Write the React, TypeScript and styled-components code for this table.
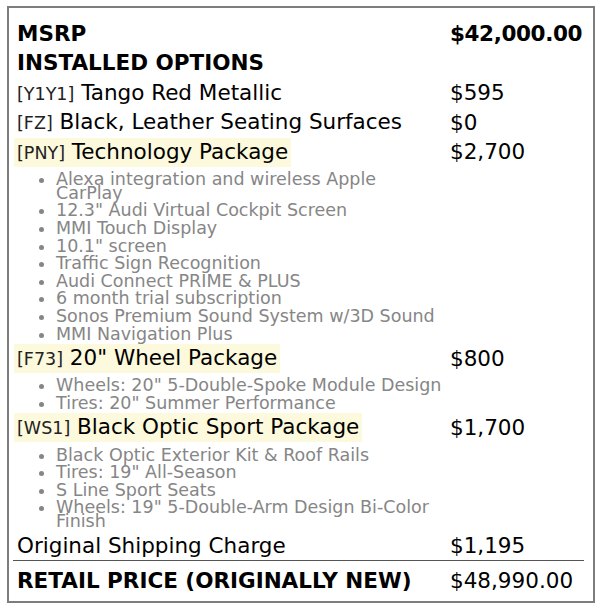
import * as React from 'react';
import styled, { createGlobalStyle } from 'styled-components';

const GlobalStyle = createGlobalStyle`
  body {
    margin: 0;
    background: #fff;
    font-family: "DejaVu Sans", "Noto Sans", sans-serif;
    color: #000;
  }
`;

const Sticker = styled.div`
  box-sizing: border-box;
  width: 588px;
  margin: 6px 0 0 7px;
  border: 2px solid #7d7d7d;
  padding: 10.5px 9px 5px 4px;
`;

const Row = styled.div`
  display: grid;
  grid-template-columns: 433px 1fr;
  align-items: end;
  height: 29.5px;
  font-size: 21.5px;
  line-height: 29.5px;
`;

const Cell = styled.div<{ $bold?: boolean; $condensed?: boolean }>`
  padding: 0 4px;
  white-space: nowrap;
  font-weight: ${(p) => (p.$bold ? 'bold' : 'normal')};
  letter-spacing: ${(p) => (p.$condensed ? '-0.4px' : 'normal')};
`;

const Label = styled.span<{ $highlight?: boolean }>`
  display: inline-block;
  margin-left: -3px;
  padding: 0 3px;
  line-height: 28px;
  background: ${(p) => (p.$highlight ? '#fcf9dc' : 'transparent')};
`;

const Code = styled.span`
  font-size: 17.5px;
  color: #222;
`;

const Features = styled.ul`
  box-sizing: border-box;
  width: 455px;
  margin: 5.75px 0 2.5px;
  padding: 0 0 0 43px;
  font-size: 17.5px;
  line-height: 14px;
  color: #868686;
  white-space: pre-line;

  li + li {
    margin-top: 3.6px;
  }
`;

const Rule = styled.div`
  height: 1px;
  margin-bottom: 5px;
  background: #555;
`;

type Option = {
  code: string;
  name: string;
  price: string;
  highlight?: boolean;
  features?: string[];
};

const options: Option[] = [
  { code: 'Y1Y1', name: 'Tango Red Metallic', price: '$595' },
  { code: 'FZ', name: 'Black, Leather Seating Surfaces', price: '$0' },
  {
    code: 'PNY',
    name: 'Technology Package',
    price: '$2,700',
    highlight: true,
    features: [
      'Alexa integration and wireless Apple\nCarPlay',
      '12.3" Audi Virtual Cockpit Screen',
      'MMI Touch Display',
      '10.1" screen',
      'Traffic Sign Recognition',
      'Audi Connect PRIME & PLUS',
      '6 month trial subscription',
      'Sonos Premium Sound System w/3D Sound',
      'MMI Navigation Plus',
    ],
  },
  {
    code: 'F73',
    name: '20" Wheel Package',
    price: '$800',
    highlight: true,
    features: ['Wheels: 20" 5-Double-Spoke Module Design', 'Tires: 20" Summer Performance'],
  },
  {
    code: 'WS1',
    name: 'Black Optic Sport Package',
    price: '$1,700',
    highlight: true,
    features: [
      'Black Optic Exterior Kit & Roof Rails',
      'Tires: 19" All-Season',
      'S Line Sport Seats',
      'Wheels: 19" 5-Double-Arm Design Bi-Color Finish',
    ],
  },
];

const App = () => {
  return (
    <>
      <GlobalStyle />
      <Sticker>
        <Row>
          <Cell $bold>MSRP</Cell>
          <Cell $bold $condensed>
            $42,000.00
          </Cell>
        </Row>
        <Row>
          <Cell $bold>INSTALLED OPTIONS</Cell>
          <Cell />
        </Row>

        {options.map((o) => (
          <React.Fragment key={o.code}>
            <Row>
              <Cell>
                <Label $highlight={o.highlight}>
                  <Code>[{o.code}]</Code> {o.name}
                </Label>
              </Cell>
              <Cell>{o.price}</Cell>
            </Row>
            {o.features && (
              <Features>
                {o.features.map((f) => (
                  <li key={f}>{f}</li>
                ))}
              </Features>
            )}
          </React.Fragment>
        ))}

        <Row>
          <Cell>Original Shipping Charge</Cell>
          <Cell>$1,195</Cell>
        </Row>
        <Rule />
        <Row>
          <Cell $bold>RETAIL PRICE (ORIGINALLY NEW)</Cell>
          <Cell>$48,990.00</Cell>
        </Row>
      </Sticker>
    </>
  );
};

export default App;
